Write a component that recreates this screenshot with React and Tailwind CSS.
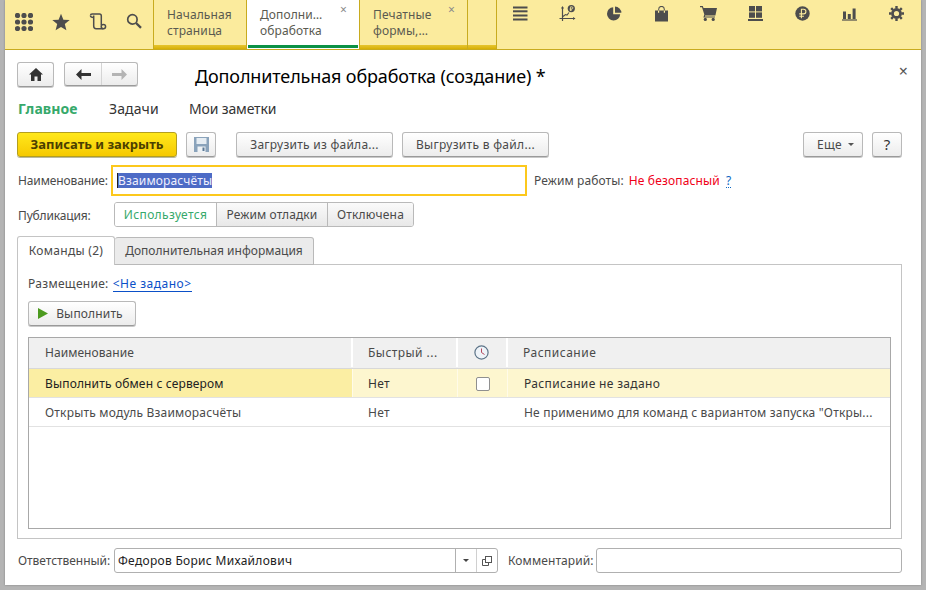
import React from "react";

const ink = "#4d4d4d";

function Waffle() {
  const dots = [];
  for (let r = 0; r < 3; r++) for (let c = 0; c < 3; c++) dots.push([c * 6.5 + 2.5, r * 6.5 + 2.5]);
  return (
    <svg width="18" height="18" viewBox="0 0 18 18" fill={ink}>
      {dots.map(([x, y]) => (
        <circle key={`${x}-${y}`} cx={x} cy={y} r="2.6" />
      ))}
    </svg>
  );
}

function Star() {
  return (
    <svg width="18" height="18" viewBox="0 0 18 18" fill={ink}>
      <path d="M9 .8l2.4 5.9 6.3.4-4.9 4 1.6 6.1L9 13.9l-5.4 3.3 1.6-6.1-4.9-4 6.3-.4z" />
    </svg>
  );
}

function Scroll() {
  return (
    <svg width="18" height="18" viewBox="0 0 18 18" fill="none" stroke={ink} strokeWidth="1.5">
      <path d="M1.5 2.5a1.6 1.6 0 0 1 1.6-1.6h7.4c1.2 0 1.8.8 1.8 2v9.4" />
      <path d="M4.7 2.6v10.5c0 1.6.9 2.7 2.4 2.7h7.2" />
      <path d="M1.5 2.8c0 1.2 1 1.6 3.2 1.6" />
      <circle cx="14.4" cy="13.6" r="2.2" />
    </svg>
  );
}

function Search() {
  return (
    <svg width="16" height="16" viewBox="0 0 16 16" fill="none" stroke={ink}>
      <circle cx="6.4" cy="6.4" r="4.7" strokeWidth="1.7" />
      <path d="M10 10l5 4.8" strokeWidth="2.4" />
    </svg>
  );
}

function Lines() {
  return (
    <svg width="15" height="15" viewBox="0 0 15 15" fill={ink}>
      <rect x="0" y="0.5" width="14.5" height="2" />
      <rect x="0" y="4.3" width="14.5" height="2" />
      <rect x="0" y="8.5" width="14.5" height="2" />
      <rect x="0" y="12.5" width="14.5" height="2" />
    </svg>
  );
}

function ChartRub() {
  return (
    <svg width="17" height="17" viewBox="0 0 17 17" fill="none" stroke={ink}>
      <path d="M3.5 2v14M.5 13.5h15.5" strokeWidth="1.2" />
      <path d="M2 3.5l1.5-2.5L5 3.5zM14 12l2.5 1.5L14 15z" fill={ink} stroke="none" />
      <path d="M4 11.5l2.5-2 1.5.5 2-2.5" strokeWidth="1.1" />
      <circle cx="12.3" cy="3.6" r="3.6" fill={ink} stroke="none" />
      <path d="M11.6 6V1.8h1.2a1 1 0 0 1 0 2.2h-2.2M10.8 5h2.2" stroke="#fbeb9d" strokeWidth=".8" />
    </svg>
  );
}

function Pie() {
  return (
    <svg width="15" height="15" viewBox="0 0 15 15" fill={ink}>
      <path d="M6.2 1.2v7h7a6.6 6.6 0 1 1-7-7z" />
      <path d="M8 .6a6.4 6.4 0 0 1 6.4 6.2H8z" />
    </svg>
  );
}

function Bag() {
  return (
    <svg width="13" height="16" viewBox="0 0 13 16" fill={ink}>
      <path d="M0 4.5h3.2V3.2a3.3 3.3 0 0 1 6.6 0v1.3H13V15.5H0zM4.2 4.5h4.6V3.2a2.3 2.3 0 0 0-4.6 0z" />
      <path d="M3 4.5h1.2v2.2H3zM8.8 4.5H10v2.2H8.8z" fill="#fbeb9d" />
    </svg>
  );
}

function Cart() {
  return (
    <svg width="17" height="15" viewBox="0 0 17 15" fill={ink}>
      <path d="M0 0h2.8l.7 2H17l-1.6 7.4H5.2l-.3 1H15v1.1H3.4l.9-3L2 1.2H0z" />
      <circle cx="5.3" cy="13.4" r="1.6" />
      <circle cx="13.2" cy="13.4" r="1.6" />
    </svg>
  );
}

function Blocks() {
  return (
    <svg width="15" height="15" viewBox="0 0 15 15" fill={ink}>
      <rect x="1" y="0" width="6" height="5.4" />
      <rect x="8" y="0" width="6" height="5.4" />
      <rect x="1" y="6.4" width="6" height="5.4" />
      <rect x="8" y="6.4" width="6" height="5.4" />
      <rect x="0" y="13" width="15" height="2" />
    </svg>
  );
}

function Ruble() {
  return (
    <svg width="15" height="15" viewBox="0 0 15 15">
      <circle cx="7.5" cy="7.5" r="7.2" fill={ink} />
      <path d="M6.4 12.2V3.3h2.2a2.3 2.3 0 0 1 0 4.6H4.3M4.3 10.2h4.6" fill="none" stroke="#fbeb9d" strokeWidth="1.1" />
    </svg>
  );
}

function Bars() {
  return (
    <svg width="15" height="15" viewBox="0 0 15 15" fill={ink}>
      <rect x="1" y="5.5" width="3" height="7.5" />
      <rect x="5.8" y="8" width="3" height="5" />
      <rect x="10.6" y="2.5" width="3" height="10.5" />
      <rect x="0" y="13.4" width="15" height="1.2" />
    </svg>
  );
}

function Gear() {
  return (
    <svg width="15" height="15" viewBox="0 0 15 15" fill="none" stroke={ink}>
      <circle cx="7.5" cy="7.5" r="4" strokeWidth="2.8" />
      <path
        d="M7.5 0v2.6M7.5 12.4V15M0 7.5h2.6M12.4 7.5H15M2.2 2.2L4 4M11 11l1.8 1.8M12.8 2.2L11 4M4 11l-1.8 1.8"
        strokeWidth="2.4"
      />
    </svg>
  );
}

function TopTab({ lines, active, closable, width }) {
  return (
    <div
      className={`relative shrink-0 border-r border-[#c8ab1f] ${width} ${active ? "bg-white" : "bg-[#fbeb9d]"}`}
    >
      {lines && (
        <div className="pt-[7px] pl-[13px] text-[12px] leading-[16px] text-[#5a5a50]">
          <div>{lines[0]}</div>
          <div>{lines[1]}</div>
        </div>
      )}
      {closable && <span className="absolute right-[12px] top-[3px] text-[12px] leading-[14px] text-[#8a8a8a]">×</span>}
      {active ? (
        <div className="absolute inset-x-[1px] bottom-[1px] h-[3px] bg-[#0b9146]" />
      ) : (
        <div className="absolute inset-x-0 bottom-0 h-[4px] bg-gradient-to-b from-[#e6c52c] to-[#d7b000]" />
      )}
    </div>
  );
}

function Btn({ children, className = "" }) {
  return (
    <div
      className={`flex h-[25px] items-center justify-center rounded-[3px] border border-[#b9b9b9] border-b-[#9a9a9a] bg-gradient-to-b from-white to-[#ececec] text-[12px] text-[#4a4a4a] shadow-[0_1px_0_#c8c8c8] ${className}`}
    >
      {children}
    </div>
  );
}

function Label({ children, className = "" }) {
  return <span className={`text-[12px] text-[#4a4a4a] ${className}`}>{children}</span>;
}

const cols = "grid grid-cols-[324px_105px_50px_1fr]";

export default function App() {
  return (
    <div className="flex h-[590px] w-[926px] overflow-hidden bg-[#b4b4b4] pb-[5px] pl-[5px] pr-[5px] tracking-[0.1px] [font-family:'Liberation_Sans',Arial,sans-serif]">
      <div className="flex w-[916px] flex-col bg-white shadow-[0_0_2px_#808080]">
        {/* top bar */}
        <div className="flex h-[50px] shrink-0 border-b border-[#c8ab1f] bg-[#fbeb9d]">
          <div className="flex w-[149px] shrink-0 items-start gap-[19px] border-r border-[#c8ab1f] pl-[10px] pt-[13px]">
            <Waffle />
            <Star />
            <Scroll />
            <Search />
          </div>
          <TopTab lines={["Начальная", "страница"]} width="w-[93px]" />
          <TopTab lines={["Дополни…", "обработка"]} active closable width="w-[113px]" />
          <TopTab lines={["Печатные", "формы,…"]} closable width="w-[108px]" />
          <TopTab width="w-[29px]" />
          <div className="flex items-start pt-[5px]">
            {[Lines, ChartRub, Pie, Bag, Cart, Blocks, Ruble, Bars, Gear].map((Icon, i) => (
              <div key={i} className="flex h-[17px] w-[47px] items-center justify-center">
                <Icon />
              </div>
            ))}
          </div>
        </div>

        <div className="relative flex flex-1 flex-col px-[12px]">
          {/* header row */}
          <div className="mt-[12px] flex h-[25px] items-start">
            <Btn className="h-[24px] w-[37px]">
              <svg width="14" height="13" viewBox="0 0 14 13" fill="#333">
                <path d="M7 0l7 6.4h-2V13H8.5V8.5h-3V13H2V6.4H0z" />
              </svg>
            </Btn>
            <div className="ml-[10px] flex h-[24px] w-[74px] rounded-[3px] border border-[#b9b9b9] border-b-[#9a9a9a] bg-gradient-to-b from-white to-[#ececec] shadow-[0_1px_0_#c8c8c8]">
              <div className="flex w-[37px] items-center justify-center border-r border-[#d4d4d4]">
                <svg width="15" height="11" viewBox="0 0 15 11" fill="#333">
                  <path d="M0 5.5L5.5 0v3.9H15v3.2H5.5V11z" />
                </svg>
              </div>
              <div className="flex flex-1 items-center justify-center">
                <svg width="15" height="11" viewBox="0 0 15 11" fill="#b4b4b4">
                  <path d="M15 5.5L9.5 0v3.9H0v3.2h9.5V11z" />
                </svg>
              </div>
            </div>
            <h1 className="ml-[57px] pt-[2px] text-[18px] font-normal leading-[25px] tracking-[-0.13px] text-black">Дополнительная обработка (создание) *</h1>
            <span className="absolute right-[13px] top-[13px] text-[16px] leading-[16px] text-[#555]">×</span>
          </div>

          {/* form sections */}
          <div className="mt-[11px] flex h-[20px] items-center text-[14px]">
            <span className="ml-[1px] w-[91px] font-bold text-[#36a96b]">Главное</span>
            <span className="w-[80px] text-[#333]">Задачи</span>
            <span className="tracking-[-0.15px] text-[#333]">Мои заметки</span>
          </div>

          {/* command bar */}
          <div className="mt-[14px] flex h-[27px] items-start">
            <div className="flex h-[25px] w-[160px] items-center justify-center rounded-[3px] border border-[#b49f1e] bg-gradient-to-b from-[#ffe81a] to-[#f6c900] text-[13px] font-bold tracking-[0px] text-[#4c3f00] shadow-[0_1px_0_#b8b8a0]">
              Записать и закрыть
            </div>
            <Btn className="ml-[9px] w-[30px]">
              <svg width="15" height="15" viewBox="0 0 15 15">
                <rect width="15" height="15" fill="#8aa3bb" />
                <rect x="2.5" y="1" width="10" height="6" fill="#e6edf3" />
                <rect x="3.5" y="9.5" width="8" height="5.5" fill="#eef2f5" />
                <rect x="8.5" y="10.5" width="2" height="3.5" fill="#5b7895" />
              </svg>
            </Btn>
            <Btn className="ml-[20px] w-[157px] tracking-[0.25px]">Загрузить из файла...</Btn>
            <Btn className="ml-[9px] w-[147px] tracking-[0.3px]">Выгрузить в файл...</Btn>
            <Btn className="ml-auto w-[60px] gap-[6px] pl-[5px] tracking-[0.3px]">
              Еще
              <span className="h-0 w-0 border-x-[3px] border-t-[3px] border-x-transparent border-t-[#555]" />
            </Btn>
            <Btn className="ml-[9px] mr-[7px] w-[30px] !text-[15px] !text-[#333]">?</Btn>
          </div>

          {/* name row */}
          <div className="mt-[6px] flex h-[31px] items-center">
            <Label className="ml-[1px] w-[93px] tracking-[-0.12px]">Наименование:</Label>
            <div className="flex h-[31px] w-[416px] items-center border-2 border-[#fcc81c] pl-[4px] text-[12px]">
              <span className="border-l border-[#222] bg-[#4d6bc6] leading-[15px] tracking-[0.15px] text-[#f0f0ff]">Взаиморасчёты</span>
            </div>
            <Label className="ml-[7px]">Режим работы:</Label>
            <span className="ml-[5px] text-[12px] tracking-[0.15px] text-[#f00018]">Не безопасный</span>
            <span className="ml-[6px] border-b border-dotted border-[#0b66c3] text-[12px] leading-[13px] text-[#0b66c3]">?</span>
          </div>

          {/* publication row */}
          <div className="mt-[6px] flex h-[26px] items-start">
            <Label className="ml-[1px] mt-[5px] w-[96px] tracking-[-0.15px]">Публикация:</Label>
            <div className="flex h-[25px] w-[300px] overflow-hidden rounded-[3px] border border-[#b9b9b9] text-[12px]">
              <div className="flex w-[102px] items-center justify-center border-r border-[#b9b9b9] bg-white tracking-[0.35px] text-[#36a96b]">Используется</div>
              <div className="flex w-[111px] items-center justify-center border-r border-[#b9b9b9] bg-gradient-to-b from-[#fafafa] to-[#e8e8e8] text-[#4a4a4a]">Режим отладки</div>
              <div className="flex flex-1 items-center justify-center bg-gradient-to-b from-[#fafafa] to-[#e8e8e8] tracking-[0.2px] text-[#4a4a4a]">Отключена</div>
            </div>
          </div>

          {/* tabs */}
          <div className="mt-[8px] flex h-[29px] items-end pr-[7px] text-[12px] text-[#4a4a4a]">
            <div className="flex h-[29px] w-[98px] items-center justify-center rounded-t-[3px] border border-b-0 border-[#c4c4c4] bg-white tracking-[0.3px]">Команды (2)</div>
            <div className="flex h-[28px] w-[199px] items-center justify-center rounded-t-[3px] border border-l-0 border-[#b9b9b9] bg-[#ebebeb] tracking-[0px]">Дополнительная информация</div>
            <div className="flex-1 border-b border-[#c4c4c4]" />
          </div>

          {/* commands panel */}
          <div className="mr-[7px] flex h-[274px] flex-col border border-t-0 border-[#c4c4c4] px-[10px]">
            <div className="mt-[10px] flex h-[18px] items-center">
              <Label className="tracking-[0.3px]">Размещение:</Label>
              <span className="ml-[4px] border-b border-[#0b50c8] text-[12px] leading-[14px] tracking-[0.5px] text-[#0b50c8]">&lt;Не задано&gt;</span>
            </div>
            <Btn className="mt-[8px] w-[108px] shrink-0 gap-[8px] pr-[3px] tracking-[0.15px]">
              <svg width="10" height="11" viewBox="0 0 10 11">
                <path d="M0 0l10 5.5L0 11z" fill="#4c9a1f" />
              </svg>
              Выполнить
            </Btn>
            <div className="mt-[11px] flex-1 border border-[#a8a8a8] text-[12px]">
              <div className={`${cols} h-[31px] border-b border-[#d8d8d8] bg-[#f0f0f0] pb-[1px] text-[#4a4a4a]`}>
                <div className="flex items-center border-r-2 border-white pl-[16px] tracking-[0.05px]">Наименование</div>
                <div className="flex items-center border-r-2 border-white pl-[15px] tracking-[0.45px]">Быстрый ...</div>
                <div className="flex items-center justify-center border-r-2 border-white pr-[1px]">
                  <svg width="15" height="15" viewBox="0 0 15 15" fill="none">
                    <circle cx="7.5" cy="7.5" r="6.6" fill="#eef3f8" stroke="#5d7488" strokeWidth="1.2" />
                    <path d="M7.5 3.5v4l3 2" stroke="#b5485c" strokeWidth="1" />
                  </svg>
                </div>
                <div className="flex items-center pl-[15px] tracking-[0.5px]">Расписание</div>
              </div>
              <div className={`${cols} h-[29px] border-b border-[#e2e2e2] bg-[#fdf6cf] text-[#333]`}>
                <div className="flex items-center border-r border-[#fffbe8] bg-[#fbeea3] pl-[16px] pt-[1px] tracking-[0.15px] text-[#222]">Выполнить обмен с сервером</div>
                <div className="flex items-center border-r border-[#fffbe8] pl-[15px] pt-[1px] tracking-[0.3px]">Нет</div>
                <div className="flex items-center justify-center border-r border-[#fffbe8] pt-[1px]">
                  <span className="h-[14px] w-[14px] rounded-[2px] border border-[#8f8f8f] bg-white" />
                </div>
                <div className="flex items-center pl-[16px] pt-[1px] tracking-[0.33px]">Расписание не задано</div>
              </div>
              <div className={`${cols} h-[29px] border-b border-[#e2e2e2] text-[#4a4a4a]`}>
                <div className="flex items-center pl-[16px] pt-[1px] tracking-[0.2px]">Открыть модуль Взаиморасчёты</div>
                <div className="flex items-center pl-[15px] pt-[1px] tracking-[0.3px]">Нет</div>
                <div />
                <div className="flex items-center whitespace-nowrap pl-[16px] pt-[1px] tracking-[0.2px]">Не применимо для команд с вариантом запуска "Откры...</div>
              </div>
            </div>
            <div className="h-[9px] shrink-0" />
          </div>

          {/* footer fields */}
          <div className="mt-[9px] flex h-[25px] items-center">
            <Label className="ml-[1px] w-[96px] tracking-[-0.05px]">Ответственный:</Label>
            <div className="flex h-[25px] w-[384px] rounded-[3px] border border-[#b0b0b0] text-[12px] tracking-[0.3px] text-[#222]">
              <div className="flex flex-1 items-center pl-[3px]">Федоров Борис Михайлович</div>
              <div className="flex w-[21px] items-center justify-center border-l border-[#b0b0b0]">
                <span className="h-0 w-0 border-x-[3px] border-t-[3px] border-x-transparent border-t-[#444]" />
              </div>
              <div className="flex w-[21px] items-center justify-center border-l border-[#d0d0d0]">
                <svg width="10" height="10" viewBox="0 0 10 10" fill="none" stroke="#555">
                  <rect x="3.5" y=".5" width="6" height="6" />
                  <path d="M3.5 3.5H.5v6h6v-3" />
                </svg>
              </div>
            </div>
            <Label className="ml-[10px] w-[88px]">Комментарий:</Label>
            <div className="h-[25px] w-[306px] rounded-[3px] border border-[#b0b0b0]" />
          </div>
        </div>
      </div>
    </div>
  );
}
